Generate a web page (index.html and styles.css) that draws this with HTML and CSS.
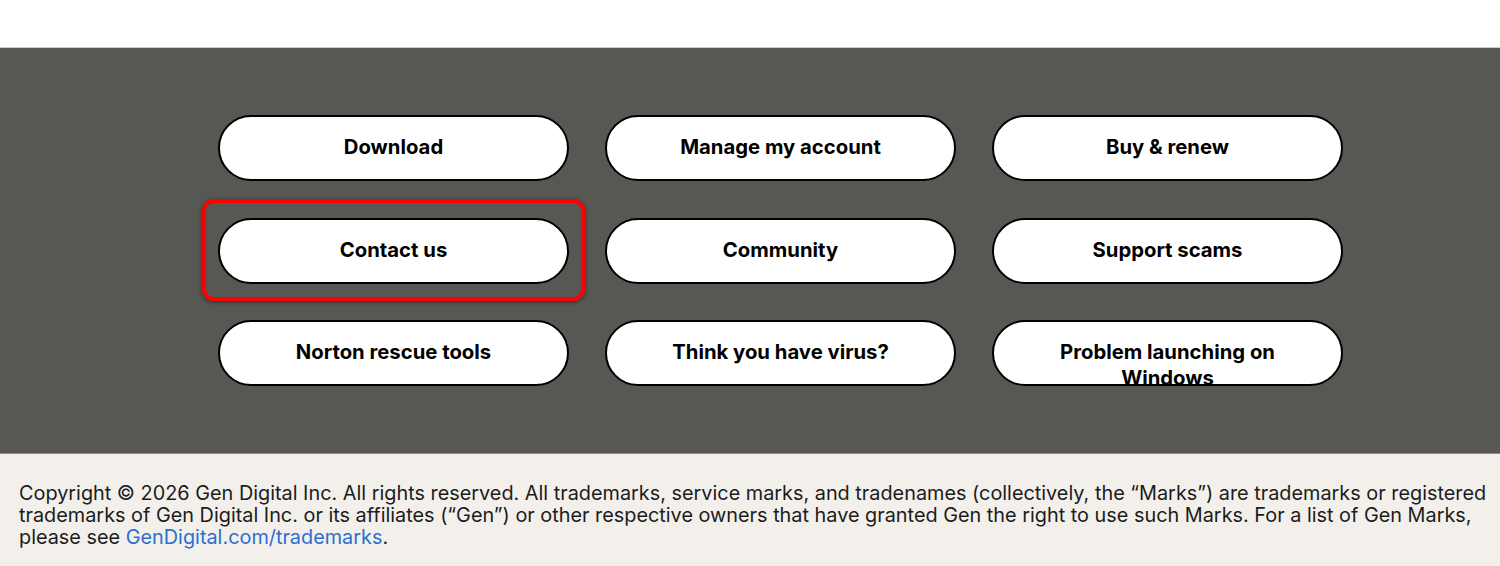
FILE: index.html
```html
<!DOCTYPE html>
<html lang="en">
<head>
<meta charset="utf-8">
<title>Support</title>
<link rel="stylesheet" href="styles.css">
</head>
<body>
<div class="top"></div>
<section class="links">
  <div class="grid">
    <a class="pill" href="#">Download</a>
    <a class="pill" href="#">Manage my account</a>
    <a class="pill" href="#">Buy &amp; renew</a>
    <div class="hl-wrap">
      <a class="pill" href="#">Contact us</a>
      <span class="highlight"></span>
    </div>
    <a class="pill" href="#">Community</a>
    <a class="pill" href="#">Support scams</a>
    <a class="pill" href="#">Norton rescue tools</a>
    <a class="pill" href="#">Think you have virus?</a>
    <a class="pill" href="#">Problem launching on Windows</a>
  </div>
</section>
<footer class="footer">
  <p>Copyright © 2026 Gen Digital Inc. All rights reserved. All trademarks, service marks, and tradenames (collectively, the “Marks”) are trademarks or registered trademarks of Gen Digital Inc. or its affiliates (“Gen”) or other respective owners that have granted Gen the right to use such Marks. For a list of Gen Marks, please see <a href="#">GenDigital.com/trademarks</a>.</p>
</footer>
</body>
</html>
```
FILE: styles.css
```css
html, body {
  margin: 0;
  padding: 0;
}
body {
  font-family: Inter, "Noto Sans", sans-serif;
  background: #ffffff;
  width: 1500px;
  height: 566px;
  overflow: hidden;
}
.top {
  height: 47px;
  background: #ffffff;
  border-bottom: 1px solid #cfcfcd;
}
.links {
  background: #575853;
  height: 406px;
  box-sizing: border-box;
  padding-top: 67px;
  border-bottom: 1px solid #8a8a86;
}
.grid {
  margin-left: 218px;
  width: 1124px;
  display: grid;
  grid-template-columns: repeat(3, 351px);
  column-gap: 36px;
  row-gap: 36.5px;
}
.pill {
  display: block;
  box-sizing: border-box;
  height: 66px;
  padding: 17px 44px 0;
  background: #ffffff;
  border: 2px solid #000000;
  border-radius: 33px;
  color: #000000;
  text-decoration: none;
  text-align: center;
  font-weight: 700;
  font-size: 20.3px;
  line-height: 26px;
}
.hl-wrap {
  position: relative;
}
.highlight {
  position: absolute;
  left: -16px;
  right: -16px;
  top: -19px;
  bottom: -17px;
  border: 4px solid #ff0000;
  border-radius: 12px;
  box-shadow: 0 1px 4px rgba(0, 0, 0, 0.5);
  pointer-events: none;
}
.footer {
  background: #f3f0ec;
  height: 112px;
  box-sizing: border-box;
  padding: 28px 7px 0 19px;
}
.footer p {
  margin: 0;
  font-size: 19.85px;
  line-height: 22px;
  color: #1c1c1c;
}
.footer a {
  color: #2c6fd1;
  text-decoration: none;
}
```
